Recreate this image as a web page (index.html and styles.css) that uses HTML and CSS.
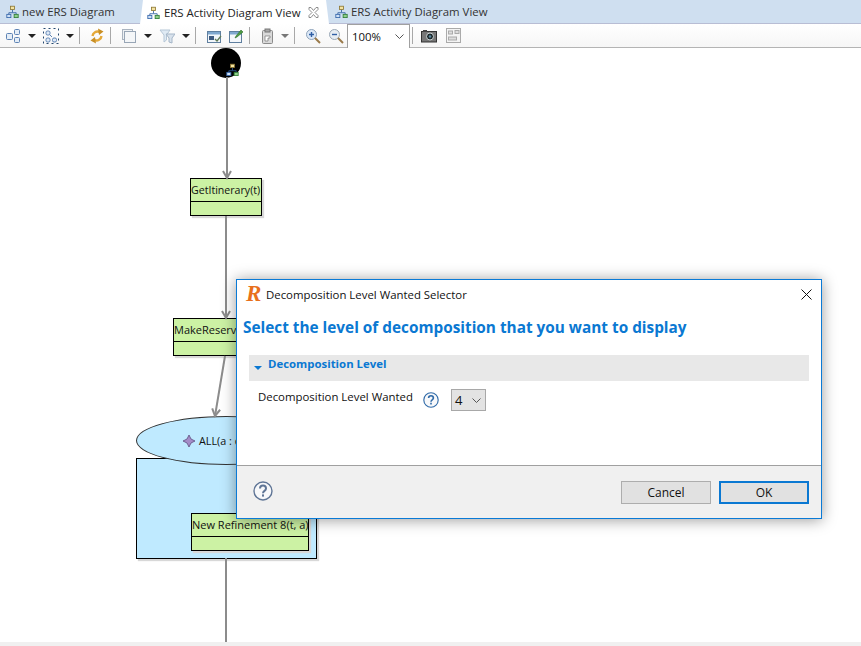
FILE: index.html
```html
<!DOCTYPE html>
<html lang="en">
<head>
    <meta charset="UTF-8">
    <title>ERS Activity Diagram View</title>
    <link rel="stylesheet" href="styles.css">
</head>
<body>
    <svg class="defs" width="0" height="0">
        <symbol id="tree" viewBox="0 0 16 16">
            <path d="M8 6v3M3.500 12V9.500h9V12" fill="none" stroke="#2a5a9c"/>
            <rect x="5.500" y="1.500" width="5" height="4" fill="#f4e3a0" stroke="#8a7430"/>
            <rect x="1" y="11.500" width="5" height="4" fill="#cfe0f5" stroke="#2f62a8"/>
            <rect x="10" y="11.500" width="5" height="4" fill="#8fd08a" stroke="#2c7a33"/>
        </symbol>
        <symbol id="help" viewBox="0 0 20 20">
            <circle cx="10" cy="10" r="9" fill="#f7f8fa" stroke="currentColor" stroke-width="1.400"/>
            <path d="M7 7.600c0-4 6-4 6 0 0 2.400-3 2.200-3 4.600" fill="none" stroke="currentColor" stroke-width="2"/>
            <rect x="9" y="13.400" width="2" height="2.200" fill="currentColor"/>
        </symbol>
    </svg>

    <!-- Editor tabs -->
    <div class="tabbar">
        <div class="tab">
            <svg class="tab-icon"><use href="#tree"/></svg>
            <span>new ERS Diagram</span>
        </div>
        <div class="tab tab-active">
            <svg class="tab-icon"><use href="#tree"/></svg>
            <span>ERS Activity Diagram View</span>
            <svg class="tab-close" viewBox="0 0 11 11"><path d="M1 .5h2l2.500 3 2.500-3h2v2l-3 3 3 3v2H8l-2.500-3-2.500 3H1v-2l3-3-3-3z" fill="#fff" stroke="#8d8d8d"/></svg>
        </div>
        <div class="tab">
            <svg class="tab-icon"><use href="#tree"/></svg>
            <span>ERS Activity Diagram View</span>
        </div>
    </div>

    <!-- Diagram toolbar -->
    <div class="toolbar">
        <svg class="tool" viewBox="0 0 16 16"><g fill="#e4edf7" stroke="#5d83b5"><rect x="1.500" y="5.500" width="6" height="6" rx="1"/><rect x="9.500" y="1.500" width="5" height="5" rx="1"/><rect x="9.500" y="9.500" width="5" height="5" rx="1"/></g></svg>
        <i class="caret"></i>
        <svg class="tool tool-gap" viewBox="0 0 16 16"><path d="M6 6l3 3" stroke="#5d83b5"/><g fill="#dfe9f5" stroke="#5d83b5"><rect x="3" y="3" width="4" height="4" rx="1.500"/><rect x="3" y="10" width="4" height="4" rx="1.500"/><rect x="9.500" y="10" width="4" height="4" rx="1.500"/></g><rect x=".5" y=".5" width="15" height="15" fill="none" stroke="#26486f" stroke-dasharray="2 3"/></svg>
        <i class="caret"></i>
        <i class="sep sep-first"></i>
        <svg class="tool" viewBox="0 0 16 16"><g fill="none" stroke="#e5a93a" stroke-width="2.400"><path d="M3.500 8a5 5 0 0 1 7-4"/><path d="M12.500 8a5 5 0 0 1-7 4"/></g><path d="M9 .5l5.500 3-4.500 3.500z" fill="#c98f24"/><path d="M7 15.500l-5.500-3 4.500-3.500z" fill="#c98f24"/></svg>
        <i class="sep"></i>
        <svg class="tool" viewBox="0 0 16 16"><rect x="1.500" y="1.500" width="10" height="10" fill="#eef1f4" stroke="#aab4c0"/><rect x="3.500" y="3.500" width="11" height="11" fill="#f4f6f8" stroke="#98a6b6"/></svg>
        <i class="caret"></i>
        <svg class="tool tool-gap" viewBox="0 0 16 16"><path d="M1 2h10L7.500 7v5L5 14V7z" fill="#dfeaf4" stroke="#b5c6d6"/><path d="M7 6h9l-3 4v5l-3-1v-4z" fill="#d8e2ec" stroke="#a5b6c8"/></svg>
        <i class="caret"></i>
        <i class="sep"></i>
        <svg class="tool" viewBox="0 0 16 16"><rect x="1.500" y="3.500" width="13" height="11" fill="#f2f6fa" stroke="#5f7f9f"/><rect x="2" y="4" width="12" height="2.500" fill="#7fa8cf"/><rect x="3" y="8" width="5" height="4" fill="#3e5a80"/><path d="M9 11l2 2 4-5" fill="none" stroke="#5d7a55" stroke-width="1.300"/></svg>
        <svg class="tool tool-tight" viewBox="0 0 16 16"><rect x="1.500" y="3.500" width="12" height="11" fill="#f4f7fb" stroke="#5f7f9f"/><rect x="2" y="4" width="11" height="2.500" fill="#7fa8cf"/><path d="M8 8l5-6 2 2-6 5-2 1z" fill="#4f9d45" stroke="#2c6c28" stroke-width=".6"/></svg>
        <i class="sep"></i>
        <svg class="tool" viewBox="0 0 16 16"><rect x="2.500" y="2.500" width="10" height="13" rx="1" fill="#d9d9d9" stroke="#8b8b8b"/><rect x="5" y="1" width="5" height="3" fill="#a8a8a8" stroke="#777"/><path d="M5 8h5v2H8v3H5z" fill="#fff" stroke="#777" stroke-width=".7"/></svg>
        <i class="caret caret-grey"></i>
        <i class="sep"></i>
        <svg class="tool" viewBox="0 0 16 16"><circle cx="6.500" cy="6.500" r="5" fill="#dce8f7" stroke="#8ea3ba"/><path d="M4 6.500h5M6.500 4v5" stroke="#2f5fa5" stroke-width="1.400"/><path d="M10 10l5 5" stroke="#9a7a4a" stroke-width="2"/></svg>
        <svg class="tool tool-zoom" viewBox="0 0 16 16"><circle cx="6.500" cy="6.500" r="5" fill="#e6ecf2" stroke="#9aa8b6"/><path d="M4 6.500h5" stroke="#2f5fa5" stroke-width="1.400"/><path d="M10 10l5 5" stroke="#9a7a4a" stroke-width="2"/></svg>
        <div class="zoom-box">
            <span>100%</span>
            <svg class="chevron" viewBox="0 0 9 5"><path d="M.5 .5l4 4 4-4" fill="none" stroke="#555"/></svg>
        </div>
        <i class="sep sep-zoom"></i>
        <svg class="tool" viewBox="0 0 16 14"><rect x=".5" y="2.500" width="15" height="10.500" fill="#777" stroke="#333"/><rect x="2" y="1" width="4" height="2" fill="#444"/><circle cx="9" cy="7.500" r="3.500" fill="#1e2a2e" stroke="#c8d0d0"/><circle cx="9" cy="7.500" r="1.300" fill="#5b8aa0"/></svg>
        <svg class="tool tool-last" viewBox="0 0 16 16"><rect x=".5" y=".5" width="14" height="14" fill="#f4f4f4" stroke="#aaa"/><rect x="2.500" y="3" width="4" height="3" fill="#ddd" stroke="#aaa"/><rect x="9" y="2.500" width="4" height="3" fill="#ddd" stroke="#aaa"/><rect x="2.500" y="9" width="8" height="3" fill="#ddd" stroke="#aaa"/></svg>
    </div>

    <!-- Diagram canvas -->
    <div class="canvas">
        <div class="start-node">
            <svg class="start-icon"><use href="#tree"/></svg>
        </div>
        <div class="node node-itinerary"><div class="node-name">GetItinerary(t)</div></div>
        <div class="node node-reserve"><div class="node-name">MakeReservation</div></div>
        <div class="loop-body"></div>
        <div class="loop-head">
            <svg class="loop-icon" viewBox="0 0 12 12"><path d="M6 0l2 4 4 2-4 2-2 4-2-4-4-2 4-2z" fill="#a48cc8" stroke="#5f4e80" stroke-width=".8"/></svg>
            <span>ALL(a : d)</span>
        </div>
        <div class="node node-refine"><div class="node-name">New Refinement 8(t, a)</div></div>
        <svg class="edges" width="861" height="595">
            <defs>
                <marker id="arrow" markerWidth="10" markerHeight="10" refX="8" refY="5" orient="auto" markerUnits="userSpaceOnUse">
                    <path d="M1 1l7 4-7 4" fill="none" stroke="#8c8c8c" stroke-width="2"/>
                </marker>
            </defs>
            <g stroke="#8c8c8c" stroke-width="2" fill="none">
                <path d="M227 29V130" marker-end="url(#arrow)"/>
                <path d="M226 168V270" marker-end="url(#arrow)"/>
                <path d="M225 308L215 368" marker-end="url(#arrow)"/>
                <path d="M226 510V594"/>
            </g>
        </svg>
    </div>
    <div class="footer-strip"></div>

    <!-- Dialog -->
    <div class="dialog">
        <div class="dialog-title">
            <span class="app-logo">R</span>
            <span>Decomposition Level Wanted Selector</span>
            <svg class="dialog-close" viewBox="0 0 11 11"><path d="M.5 .5l10 10M10.500 .5l-10 10" stroke="#111" fill="none"/></svg>
        </div>
        <div class="dialog-main">
            <h1 class="dialog-heading">Select the level of decomposition that you want to display</h1>
            <div class="section-bar">
                <i class="section-arrow"></i>
                <span>Decomposition Level</span>
            </div>
            <div class="field-row">
                <span class="field-label">Decomposition Level Wanted</span>
                <svg class="field-help"><use href="#help"/></svg>
                <div class="level-select">
                    <span>4</span>
                    <svg class="chevron" viewBox="0 0 9 5"><path d="M.5 .5l4 4 4-4" fill="none" stroke="#555"/></svg>
                </div>
            </div>
        </div>
        <div class="dialog-footer">
            <svg class="footer-help"><use href="#help"/></svg>
            <button class="btn">Cancel</button>
            <button class="btn btn-default">OK</button>
        </div>
    </div>
</body>
</html>
```

FILE: styles.css
```css
/* Basic page */
html, body {
    height: 100%;
}

body {
    margin: 0;
    width: 861px;
    height: 646px;
    overflow: hidden;
    position: relative;
    display: flex;
    flex-direction: column;
    background-color: #fff;
    font-family: "Open Sans", "Noto Sans", sans-serif;
    font-size: 11.4px;
    color: #111;
}

.defs {
    position: absolute;
}

/* Tabs */
.tabbar {
    height: 24px;
    flex: none;
    box-sizing: border-box;
    display: flex;
    background-color: #cfdff0;
    border-bottom: 1px solid #b8bdd4;
}

.tab {
    display: flex;
    align-items: center;
    width: 140px;
    padding-left: 6px;
    box-sizing: border-box;
    color: #333;
    white-space: nowrap;
}

.tab-active {
    width: 189px;
    height: 24px;
    padding-left: 7px;
    background-color: #fff;
    color: #222;
    clip-path: polygon(3px 0, calc(100% - 3px) 0, 100% 100%, 0 100%);
}

.tab-active .tab-icon {
    margin-right: 4px;
}

.tab-icon {
    width: 13px;
    height: 13px;
    margin-right: 3px;
    flex: none;
}

.tab-close {
    width: 11px;
    height: 11px;
    margin-left: 8px;
}

/* Toolbar */
.toolbar {
    height: 23px;
    flex: none;
    display: flex;
    align-items: center;
    padding-left: 5px;
    background: linear-gradient(#fff, #f6f6f6);
    border-bottom: 1px solid #b4b4b4;
}

.tool {
    width: 16px;
    height: 16px;
    flex: none;
}

.tool-gap {
    margin-left: 7px;
}

.tool-tight {
    margin-left: 6px;
}

.tool-zoom {
    margin-left: 7px;
}

.tool-last {
    margin-left: 9px;
}

.caret {
    width: 0;
    height: 0;
    margin-left: 7px;
    border-left: 4px solid transparent;
    border-right: 4px solid transparent;
    border-top: 4px solid #222;
}

.caret-grey {
    margin-left: 5px;
    border-top-color: #777;
}

.sep {
    width: 1px;
    height: 17px;
    margin: 0 10px 0 5px;
    background-color: #a8a8a8;
    flex: none;
}

.sep-first {
    margin-right: 9px;
}

.sep-zoom {
    margin: 0 8px 0 2px;
}

.zoom-box {
    width: 63px;
    height: 24px;
    margin-left: 3px;
    align-self: flex-start;
    box-sizing: border-box;
    display: flex;
    align-items: center;
    justify-content: space-between;
    padding: 0 5px 0 4px;
    background-color: #fff;
    border: 1px solid #a0a0a0;
    border-bottom: 0;
}

.chevron {
    width: 9px;
    height: 5px;
}

/* Canvas */
.canvas {
    flex: 1;
    position: relative;
}

.edges {
    position: absolute;
    left: 0;
    top: 0;
}

.start-node {
    position: absolute;
    left: 211px;
    top: 0;
    width: 30px;
    height: 30px;
    border-radius: 50%;
    background-color: #000;
}

.start-icon {
    position: absolute;
    left: 15px;
    top: 15px;
    width: 13px;
    height: 13px;
}

.node {
    position: absolute;
    box-sizing: border-box;
    height: 38px;
    background-color: #ccf2a4;
    border: 1px solid #000;
    box-shadow: 2px 2px 1px #d8d8d8;
}

.node-name {
    height: 22px;
    line-height: 22px;
    border-bottom: 1px solid #000;
    white-space: nowrap;
    font-size: 11px;
}

.node-itinerary {
    left: 190px;
    top: 130px;
    width: 72px;
}

.node-itinerary .node-name {
    font-size: 10.6px;
}

.node-reserve {
    left: 173px;
    top: 270px;
    width: 100px;
}

.node-refine {
    left: 191px;
    top: 465px;
    width: 118px;
}

.loop-head {
    position: absolute;
    left: 136px;
    top: 368px;
    width: 180px;
    height: 49px;
    box-sizing: border-box;
    display: flex;
    align-items: center;
    padding-left: 46px;
    gap: 4px;
    background-color: #bfeaff;
    border: 1px solid #333;
    border-radius: 50%;
    font-size: 10.8px;
    white-space: nowrap;
}

.loop-icon {
    width: 12px;
    height: 12px;
}

.loop-body {
    position: absolute;
    left: 136px;
    top: 410px;
    width: 181px;
    height: 101px;
    box-sizing: border-box;
    background-color: #bfeaff;
    border: 1px solid #000;
    box-shadow: 2px 2px 1px #d8d8d8;
}

.footer-strip {
    height: 4px;
    flex: none;
    background-color: #f0f0f0;
}

/* Dialog */
.dialog {
    position: absolute;
    left: 236px;
    top: 279px;
    width: 586px;
    height: 240px;
    box-sizing: border-box;
    display: flex;
    flex-direction: column;
    background-color: #fff;
    border: 1px solid #0a7ad6;
    box-shadow: 0 1px 14px rgba(0, 0, 0, 0.4);
}

.dialog-title {
    height: 28px;
    flex: none;
    display: flex;
    align-items: center;
    padding-left: 9px;
    white-space: nowrap;
}

.app-logo {
    width: 20px;
    font-family: "Liberation Serif", serif;
    font-style: italic;
    font-weight: bold;
    font-size: 23px;
    line-height: 24px;
    color: #e8701c;
}

.dialog-close {
    width: 11px;
    height: 11px;
    margin-left: auto;
    margin-right: 9px;
}

.dialog-main {
    flex: 1;
    padding: 0 12px 0 6px;
}

.dialog-heading {
    margin: 9px 0 18px;
    font-size: 15.35px;
    line-height: 20px;
    font-weight: bold;
    color: #0a78d2;
    white-space: nowrap;
}

.section-bar {
    margin-left: 6px;
    height: 26px;
    display: flex;
    align-items: flex-start;
    padding: 1px 0 0 5px;
    box-sizing: border-box;
    gap: 6px;
    background-color: #e8e8e8;
    color: #0a78d2;
    font-weight: bold;
}

.section-arrow {
    width: 0;
    height: 0;
    margin-top: 10px;
    border-left: 4px solid transparent;
    border-right: 4px solid transparent;
    border-top: 4px solid #0a78d2;
}

.field-row {
    display: flex;
    align-items: flex-start;
    margin: 8px 0 0 15px;
}

.field-label {
    width: 165px;
    line-height: 16px;
    white-space: nowrap;
}

.field-help {
    width: 16px;
    height: 16px;
    margin-top: 3px;
    color: #2f6aa8;
}

.level-select {
    width: 35px;
    height: 22px;
    margin-left: 12px;
    box-sizing: border-box;
    display: flex;
    align-items: center;
    justify-content: space-between;
    padding: 0 4px 0 3px;
    background-color: #e3e3e3;
    border: 1px solid #a8a8a8;
    font-size: 13px;
}

.dialog-footer {
    height: 53px;
    flex: none;
    box-sizing: border-box;
    display: flex;
    align-items: flex-start;
    padding: 15px 12px 0 16px;
    background-color: #f0f0f0;
    border-top: 1px solid #a0a0a0;
}

.footer-help {
    width: 20px;
    height: 20px;
    margin-right: auto;
    color: #5f7596;
}

.btn {
    width: 90px;
    height: 23px;
    padding: 0;
    margin-left: 8px;
    font-family: inherit;
    font-size: 12px;
    color: #111;
    background-color: #e1e1e1;
    border: 1px solid #adadad;
}

.btn-default {
    border: 2px solid #0a78d2;
}
```
